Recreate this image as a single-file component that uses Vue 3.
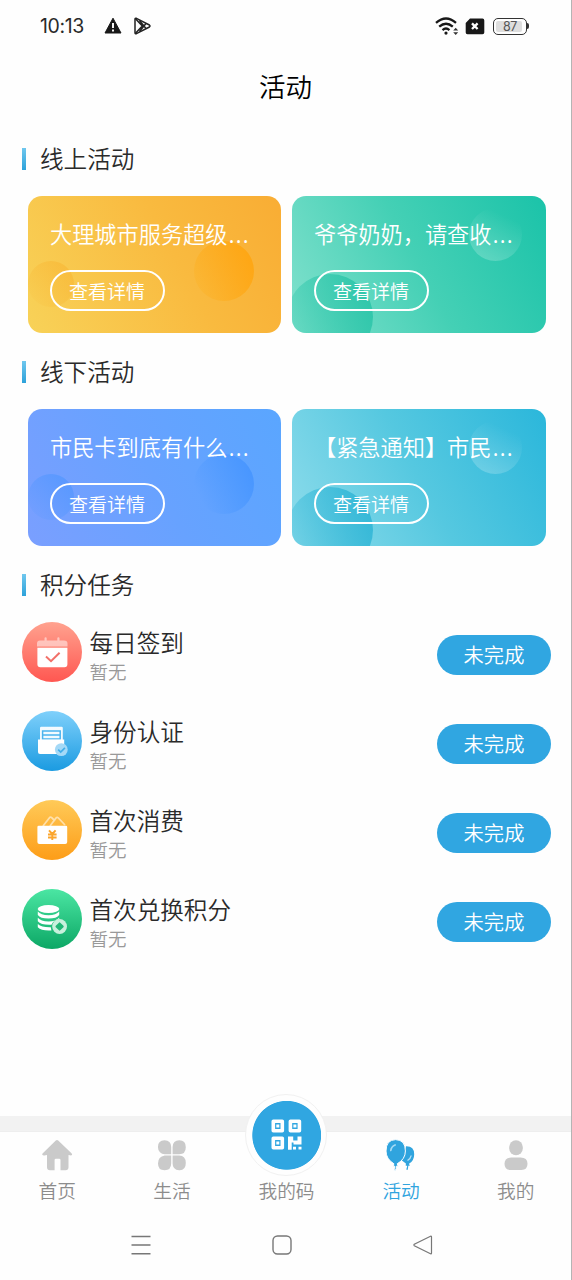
<script setup>
const groups = [
  {
    title: '线上活动',
    cards: [
      { text: '大理城市服务超级', theme: 'orange' },
      { text: '爷爷奶奶，请查收', theme: 'green' }
    ]
  },
  {
    title: '线下活动',
    cards: [
      { text: '市民卡到底有什么', theme: 'blue' },
      { text: '【紧急通知】市民', theme: 'cyan' }
    ]
  }
]

const tasks = [
  { name: '每日签到', icon: 'sign' },
  { name: '身份认证', icon: 'identity' },
  { name: '首次消费', icon: 'spend' },
  { name: '首次兑换积分', icon: 'points' }
]

const tabs = [
  { name: '首页', icon: 'home' },
  { name: '生活', icon: 'life' },
  { name: '我的码', icon: 'code' },
  { name: '活动', icon: 'activity' },
  { name: '我的', icon: 'me' }
]
</script>

<template>
  <div class="screen">
    <header class="status">
      <span class="time">10:13</span>
      <svg class="warn" width="18" height="18" viewBox="0 0 18 18">
        <path d="M9 1.2 17 16H1Z" fill="#181818" stroke="#181818" stroke-linejoin="round" />
        <path d="M9 6v5M9 12.4v2" stroke="#fff" stroke-width="1.9" />
      </svg>
      <svg class="play" width="18" height="18" viewBox="0 0 18 18" fill="none" stroke="#222" stroke-width="1.5" stroke-linejoin="round">
        <path d="M2.400 1.300Q1 .8 1 2.200v13.600q0 1.400 1.400.9L15.400 10q1.200-1 0-2Z" />
        <path d="M1.500 1.800 8.300 9l-6.800 7.200M5.500 3.500l6.500 8M5.500 14.500l6.500-8" />
      </svg>
      <span class="spacer"></span>
      <svg class="wifi" width="24" height="19" viewBox="0 0 24 19" fill="none" stroke="#181818" stroke-width="2.3">
        <path d="M1 5.900Q11 -2.900 21 5.900M4.200 9.700Q11 3.700 17.800 9.700M7.500 13.100Q11 10 14.400 13.100" />
        <circle cx="11" cy="16.100" r="1.6" fill="#181818" stroke="none" />
        <path d="m18.200 13.600 2.500-2.800 2.500 2.800Zm0 1.700 2.500 2.800 2.500-2.800Z" fill="#333" stroke="none" />
      </svg>
      <svg class="sim" width="20" height="17" viewBox="0 0 20 17">
        <path d="M5 .6h12.500q1.800 0 1.800 1.800v12q0 1.800-1.800 1.800h-15Q.7 16.200.7 14.400V5Z" fill="#181818" />
        <path d="m7 5.400 5.600 5.600M12.600 5.400 7 11" stroke="#fff" stroke-width="2.3" />
      </svg>
      <span class="battery"><span class="charge">87</span></span>
    </header>

    <h1 class="title">活动</h1>

    <main>
      <section v-for="group in groups" :key="group.title" class="group">
        <h2>{{ group.title }}</h2>
        <div class="cards">
          <article v-for="card in group.cards" :key="card.text" class="card" :class="card.theme">
            <i class="bubble left"></i>
            <i class="bubble right"></i>
            <p class="card-text">{{ card.text }}<span class="dots">…</span></p>
            <button class="detail">查看详情</button>
          </article>
        </div>
      </section>

      <section class="tasks">
        <h2>积分任务</h2>
        <div v-for="task in tasks" :key="task.name" class="task">
          <span class="badge" :class="task.icon">
            <svg width="60" height="60" viewBox="0 0 60 60">
              <g v-if="task.icon === 'sign'">
                <path d="M15 24.500v-3q0-3 3-3h4.500v-2.300q0-1 1.100-1t1.100 1v2.300h10.600v-2.300q0-1 1.100-1t1.100 1v2.300H42q3.500 0 3.500 3v3Z" fill="#fff" opacity=".5" />
                <path d="M15.400 25.800h30v16.400q0 3-3 3h-24q-3 0-3-3Z" fill="#fff" />
                <path d="m24 34.600 5 4.600 8.600-8.400" fill="none" stroke="#f27069" stroke-width="2" />
              </g>
              <g v-else-if="task.icon === 'identity'">
                <path d="M18 29V17q0-1.200 1.200-1.200h20.400q1.200 0 1.200 1.200v12Z" fill="#fff" opacity=".92" />
                <path d="M20.600 20h17.600v8H20.600zM21 24h17" fill="none" stroke="#4bb4ee" stroke-width="1.500" />
                <path d="M16 28.500h26.200V43H18q-2 0-2-2Z" fill="#fff" />
                <circle cx="39.300" cy="38.600" r="6.400" fill="#a4d9f7" />
                <path d="m36.200 38.600 2.500 2.400 4.200-4.200" fill="none" stroke="#42aee9" stroke-width="1.700" />
              </g>
              <g v-else-if="task.icon === 'spend'">
                <path d="m21 26 6.500-8.300q1-1.200 2.200 0L33 21M28 26l6-8q1.200-1.300 2.400 0L43 25" fill="none" stroke="#fff" stroke-width="1.800" opacity=".55" />
                <path d="M15.400 27q0-1.300 1.300-1.300h27.200q1.300 0 1.300 1.300v15q0 2-2 2H17.400q-2 0-2-2Z" fill="#fff" />
                <path d="m27 30.300 3.300 3.700 3.300-3.700M26 34.500h8.600M26 37.500h8.600M30.300 34v6" fill="none" stroke="#fba62e" stroke-width="1.900" />
              </g>
              <g v-else>
                <ellipse cx="26.500" cy="20" rx="10.800" ry="4" fill="#fff" />
                <path d="M15.800 22.500q3 3.700 10.700 3.700t10.700-3.700v3.500q-2.400 3.600-10.700 3.600T15.800 26ZM15.800 28.700q3 3.700 10.700 3.700t10.700-3.700v1.500q-6 .8-7.700 5.500-10.500.5-13.700-3.500ZM15.800 35q4 3.500 13 3.200l.6 3.300q-10 .6-13.600-3.200Z" fill="#fff" />
                <circle cx="37.600" cy="37.500" r="7.400" fill="#c8f0dd" />
                <path d="m37.600 34.300 3.200 3.200-3.200 3.200-3.200-3.200Z" fill="#22b777" stroke="#22b777" stroke-width="1.800" stroke-linejoin="round" />
              </g>
            </svg>
          </span>
          <div class="task-info">
            <h3>{{ task.name }}</h3>
            <p>暂无</p>
          </div>
          <button class="state">未完成</button>
        </div>
      </section>
    </main>

    <footer>
      <div class="band"></div>
      <nav class="tabs">
        <a v-for="tab in tabs" :key="tab.name" class="tab" :class="{ active: tab.icon === 'activity' }">
          <span v-if="tab.icon === 'code'" class="code-slot">
            <span class="code-disc">
              <svg width="31" height="32" viewBox="0 0 31 32">
                <path d="M2.300 2.300h9v9.400h-9zM19.400 2.300h9v9.400h-9zM2.300 19.300h9v9.400h-9z" fill="none" stroke="#fff" stroke-width="3.600" stroke-linejoin="round" />
                <path d="M5.300 5.500h3v3h-3zM22.400 5.500h3v3h-3zM5.300 22.500h3v3h-3z" fill="#fff" />
                <path d="M17 17.400h5.200v4h4.300v-4h4v8h-8v-2h-1.800v7.400H17ZM22 27.700h3v2.800h-3zM27.500 27.700h3v2.800h-3z" fill="#fff" />
              </svg>
            </span>
          </span>
          <svg v-else class="tab-icon" width="32" height="32" viewBox="0 0 32 32" fill="#cacaca">
            <path v-if="tab.icon === 'home'" d="M14.800 1.600q1.200-1 2.400 0L30.500 14.200q1 1 .4 1.800-.5.700-1.900.3l-1.500-.4v12.300q0 3-3 3h-5V21q0-1.300-1.300-1.300h-3.300q-1.300 0-1.300 1.300v10.200H9q-3 0-3-3V15.900l-2.700.6q-1.500.1-2-.7-.4-.7.500-1.600Z" />
            <g v-else-if="tab.icon === 'life'">
              <path d="M15.200 15.200H8.700A6.700 6.700 0 0 1 2 8.400V7.800Q2 1.200 8.500 1.200T15.200 8ZM16.600 15.200h6.500q6.700 0 6.700-7T23.300 1.200 16.600 8ZM15.200 16.600v7.700q0 7-6.600 7T2 24.500t6.700-7.900ZM16.600 16.600h6.500q6.700 0 6.700 7.500t-6.600 7.200-6.600-6.700Z" />
            </g>
            <g v-else-if="tab.icon === 'activity'" fill="#30a4de">
              <path d="M21 7.200q8.200-.3 8.200 8 0 6.600-5.200 9.500l.8 2h-1.500q-.2 2.400-.7 4.300l-1.300-.5 1-3.800h-1.600l.2-2.200-4-3Z" />
              <path d="M22.500 21.500q3.200-2 3.700-5" stroke="#b4e0f5" stroke-width="1.400" fill="none" />
              <path d="M10.600.6q9.800.3 9.800 11.400 0 8.200-8.200 12.800l1 2.400h-1.900q.3 2.500-1.200 4.700l-1.200-.5q1-2 .8-4.200H8.100l.8-2.400Q1 20 1 12 1 .9 10.600.6Z" stroke="#fff" />
              <path d="M5.800 11.500q.5-4 4.300-5.500" fill="none" stroke="#a4daf4" stroke-width="1.700" stroke-linecap="round" />
            </g>
            <g v-else>
              <rect x="9.200" y="1.300" width="13.600" height="15" rx="6.800" />
              <path d="M11.500 18.600h9Q27.500 18.600 27.500 24.800T21.500 31h-11q-6 0-6-6.200t7-6.200Z" />
            </g>
          </svg>
          <span class="tab-name">{{ tab.name }}</span>
        </a>
      </nav>
      <div class="system">
        <svg width="20" height="20" viewBox="0 0 20 20"><path d="M.5 1.500h19M.5 10h19M.5 18.700h19" stroke="#777" stroke-width="1.400" /></svg>
        <svg width="20" height="20" viewBox="0 0 20 20"><rect x="1" y="1" width="18" height="18" rx="4.500" fill="none" stroke="#777" stroke-width="1.400" /></svg>
        <svg width="20" height="20" viewBox="0 0 20 20"><path d="M17.500 1.200q1-.3 1 .8v16q0 1.200-1 .8L1.300 10.700q-.8-.7 0-1.400Z" fill="none" stroke="#777" stroke-width="1.200" /></svg>
      </div>
    </footer>
  </div>
</template>

<style>
body {
  background: #fefefe;
}
</style>

<style scoped>
* {
  box-sizing: border-box;
  margin: 0;
  padding: 0;
}

.screen {
  display: flex;
  flex-direction: column;
  height: 1280px;
  border-right: 1px solid #b4b4b4;
  overflow: hidden;
  font-family: "Noto Sans CJK SC", sans-serif;
  font-weight: 350;
  color: #2a2a2a;
}

h1,
h2,
h3 {
  font-weight: 350;
}

.status {
  display: flex;
  align-items: center;
  height: 52px;
  padding: 0 43px 0 40px;
}

.time {
  width: 64px;
  font: 400 19.500px Inter, sans-serif;
  letter-spacing: -0.4px;
  white-space: nowrap;
}

.play {
  margin-left: 12px;
}

.spacer {
  flex: 1;
}

.sim {
  margin-left: 6px;
}

.battery {
  position: relative;
  width: 34px;
  height: 17px;
  margin: 0 1px 0 8px;
  padding: 2px;
  border: 1px solid #333;
  border-radius: 5px;
}

.battery::after {
  content: "";
  position: absolute;
  right: -3px;
  top: 4px;
  width: 2px;
  height: 6px;
  border-radius: 0 2px 2px 0;
  background: #333;
}

.charge {
  display: block;
  width: 26px;
  height: 11px;
  padding-left: 2px;
  border-radius: 2px;
  background: #dedede;
  font: 400 12.500px/11px Inter, sans-serif;
  letter-spacing: -0.5px;
  text-align: center;
  color: #555;
}

.title {
  height: 70px;
  font-size: 26.500px;
  line-height: 67px;
  text-align: center;
  color: #000;
}

main {
  flex: 1;
  padding: 21px 20px 0 22px;
}

h2 {
  display: flex;
  align-items: center;
  height: 32px;
  padding-bottom: 2px;
  font-size: 23.600px;
  line-height: 30px;
}

h2::before {
  content: "";
  width: 3.500px;
  height: 22px;
  margin: 2px 14.500px 0 0;
  background: linear-gradient(#6fc7ee, #2da2da);
}

.group {
  height: 213px;
}

.cards {
  display: grid;
  grid-template-columns: 253px 253.500px;
  gap: 11px;
  margin: 21px 0 0 6px;
}

.card {
  position: relative;
  height: 137px;
  padding: 20px 22px 0;
  border-radius: 14px;
  overflow: hidden;
  color: #fff;
}

.card-text {
  position: relative;
  height: 34px;
  font-size: 22.200px;
  line-height: 34px;
  white-space: nowrap;
}

.dots {
  margin-left: 0.5px;
  font-family: "Noto Sans", sans-serif;
  font-size: 29px;
  font-weight: 300;
  line-height: 20px;
}

.detail {
  position: relative;
  display: block;
  width: 115px;
  height: 41px;
  margin-top: 20px;
  border: 2px solid #fff;
  border-radius: 21px;
  background: none;
  font: inherit;
  font-size: 19px;
  line-height: 36px;
  text-indent: -1px;
  color: inherit;
}

.bubble {
  position: absolute;
  border-radius: 50%;
}

.orange .left,
.blue .left {
  left: 0;
  top: 65px;
  width: 46px;
  height: 46px;
}

.orange .right,
.blue .right {
  left: 166px;
  top: 45px;
  width: 60px;
  height: 60px;
}

.green .left,
.cyan .left {
  left: -5px;
  top: 78px;
  width: 86px;
  height: 86px;
}

.green .right,
.cyan .right {
  left: 177px;
  top: 12px;
  width: 53px;
  height: 53px;
  background: linear-gradient(25deg, rgba(255, 255, 255, 0.25), rgba(255, 255, 255, 0) 80%);
}

.orange {
  background: linear-gradient(62deg, #f8d258, #f9ba3f 58%, #f9ad34);
}

.orange .left {
  background: linear-gradient(50deg, rgba(249, 184, 50, 0.02), rgba(249, 174, 40, 0.5));
}

.orange .right {
  background: linear-gradient(65deg, rgba(252, 184, 42, 0.2), #ffa510);
}

.green {
  background: linear-gradient(62deg, #82e1cd, #44d0b5 50%, #1bc3a9);
}

.green .left {
  background: linear-gradient(70deg, rgba(68, 208, 181, 0.25), #2cc5a9);
}

.blue {
  background: linear-gradient(62deg, #7a9fff, #67a2ff 50%, #5aa6ff);
}

.blue .left {
  background: linear-gradient(45deg, rgba(90, 155, 255, 0.05), rgba(75, 148, 255, 0.7));
}

.blue .right {
  background: linear-gradient(65deg, rgba(90, 158, 255, 0) 15%, #4594ff);
}

.cyan {
  background: linear-gradient(62deg, #8edceb, #55c8e0 50%, #2bb7db);
}

.cyan .left {
  background: linear-gradient(70deg, rgba(75, 196, 222, 0.25), #31b6d6);
}

.task {
  display: flex;
  align-items: center;
  height: 60px;
  margin-bottom: 29px;
}

.tasks h2 {
  margin-bottom: 21px;
}

.badge {
  width: 60px;
  height: 60px;
  border-radius: 50%;
}

.badge svg {
  display: block;
}

.sign {
  background: linear-gradient(#ffa28f, #ff5751);
}

.identity {
  background: linear-gradient(#7fd0fb, #1b9be1);
}

.spend {
  background: linear-gradient(#ffca58, #fd9d18);
}

.points {
  background: linear-gradient(#4be6a3, #0ca765);
}

.task-info {
  flex: 1;
  padding: 6px 0 0 7.500px;
}

.task-info h3 {
  font-size: 23.600px;
  line-height: 32px;
}

.task-info p {
  font-size: 18.500px;
  line-height: 26px;
  color: #999;
}

.state {
  width: 114px;
  height: 40px;
  margin-top: 6px;
  padding-bottom: 2px;
  border: 0;
  border-radius: 20px;
  background: #30a6e1;
  font: inherit;
  font-size: 20.300px;
  line-height: 38px;
  color: #fff;
}

.band {
  height: 16px;
  border-bottom: 1px solid #eee;
  background: #f2f2f2;
}

.tabs {
  display: flex;
  width: 573px;
  height: 78px;
}

.tab {
  position: relative;
  flex: 1;
  display: flex;
  flex-direction: column;
  align-items: center;
  padding-top: 7px;
  color: #8c8c8c;
}

.tab-name {
  margin-top: 5px;
  font-size: 18.700px;
  line-height: 28px;
}

.active {
  color: #30a4de;
}

.code-slot {
  width: 32px;
  height: 32px;
}

.code-disc {
  position: absolute;
  left: calc(50% - 41px);
  top: -38px;
  display: flex;
  align-items: center;
  justify-content: center;
  width: 82px;
  height: 82px;
  border: 1px solid #f1f1f1;
  border-radius: 50%;
  background: radial-gradient(circle at 40.700px 40.300px, #30a6e1 34px, #fefefe 34.800px);
}

.system {
  display: flex;
  justify-content: center;
  gap: 121px;
  height: 70px;
  padding: 25px 8px 0 0;
}
</style>
